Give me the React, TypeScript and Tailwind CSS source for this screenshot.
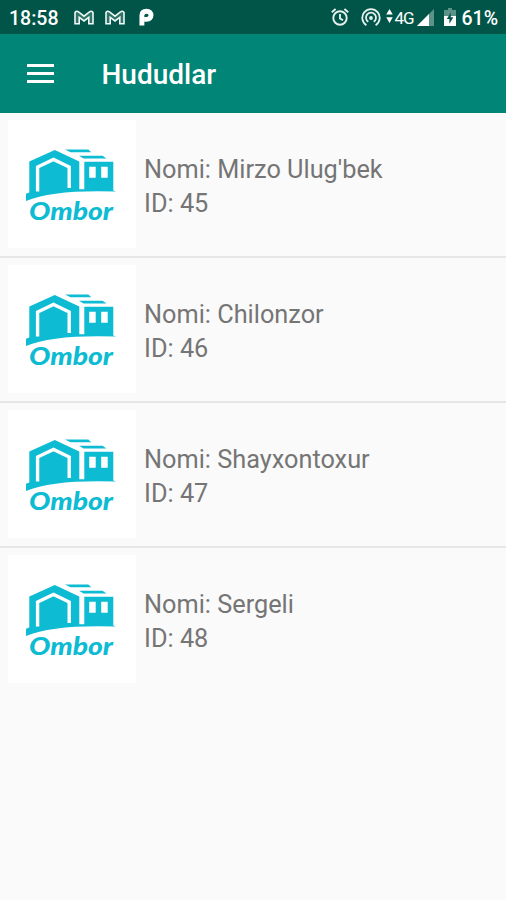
type Region = { id: number; name: string };

const regions: Region[] = [
  { id: 45, name: "Mirzo Ulug'bek" },
  { id: 46, name: "Chilonzor" },
  { id: 47, name: "Shayxontoxur" },
  { id: 48, name: "Sergeli" },
];

export default function App() {
  return (
    <div className="min-h-[900px] w-full bg-[#fafafa] font-['Roboto',sans-serif]">
      <StatusBar />
      <header className="flex h-[79px] items-center bg-[#018577] pl-[26.5px] text-white">
        <button aria-label="Menu" className="flex w-[27px] flex-col gap-[5px]">
          <span className="h-[3px] bg-white" />
          <span className="h-[3px] bg-white" />
          <span className="h-[3px] bg-white" />
        </button>
        <h1 className="ml-[48px] pt-[3px] text-[28px] font-medium leading-none">
          Hududlar
        </h1>
      </header>
      <main>
        {regions.map((r) => (
          <RegionRow key={r.id} region={r} />
        ))}
      </main>
    </div>
  );
}

function RegionRow({ region }: { region: Region }) {
  return (
    <div className="flex h-[145px] items-start gap-2 border-b-2 border-[#e6e6e6] pl-2 pt-[7px] last:border-0">
      <div className="size-32 shrink-0 bg-white">
        <OmborLogo />
      </div>
      <div className="pt-[33px] text-[25.3px] leading-[34px] text-[#757575]">
        <p>Nomi: {region.name}</p>
        <p>ID: {region.id}</p>
      </div>
    </div>
  );
}

function OmborLogo() {
  return (
    <svg viewBox="0 0 128 128" className="size-32" fill="#0dbbd3">
      {/* roof strips */}
      <path d="M57 29.6H80.3L83.3 32.2H62.5Z" />
      <path d="M71 35.7H94.5L98.5 38.5H75.5Z" />
      {/* barn and ground */}
      <path d="M21.3 41.5L46.8 30L71.3 41.5V69.3H76.3V41.7H105.3V70.4L108 71.6Q46 69.5 18 81V73.8L21.3 72.6Z" />
      <path
        d="M29.6 71.5V47L45.5 39.4L61.2 47V68"
        fill="none"
        stroke="#fff"
        strokeWidth="3.4"
      />
      {/* windows */}
      <path d="M81.2 46.7H87.7V57.7H81.2ZM93.2 46.7H99.7V57.7H93.2Z" fill="#fff" />
      <text
        x="21"
        y="100"
        textLength="84"
        lengthAdjust="spacingAndGlyphs"
        className="font-['Lato',sans-serif] text-[24px] font-black italic"
      >
        Ombor
      </text>
    </svg>
  );
}

function StatusBar() {
  return (
    <div className="flex h-[34px] items-center bg-[#015548] pl-[9px] pr-[8px] text-white">
      <span className="pt-[3px] text-[19.5px] font-medium leading-none">18:58</span>
      <MailIcon className="ml-[16px]" />
      <MailIcon className="ml-[11px]" />
      {/* P badge */}
      <svg viewBox="0 0 15 18" className="ml-[14px] h-[18px] w-[15px]">
        <path
          d="M2.9 17.6V7.3C2.9 4.5 4.8 3.2 7.6 3.2C10.3 3.2 12 4.9 12 7.3C12 9.7 10.3 11.4 7.6 11.4H5.4"
          fill="none"
          stroke="#fff"
          strokeWidth="4.9"
        />
      </svg>

      <div className="ml-auto flex items-center">
        <AlarmIcon />
        <HotspotIcon />
        <svg viewBox="0 0 7 14" className="mb-[2px] ml-[5px] h-[14px] w-[7px]" fill="#fff">
          <path d="M3.5 0L6.8 5.5H.2ZM3.5 14L.2 8.2H6.8Z" />
        </svg>
        <span className="ml-[1px] w-[20px] pt-[3px] text-[17px] leading-none tracking-[-1px]">
          4G
        </span>
        <svg viewBox="0 0 17 17" className="ml-[3px] size-[17px]">
          <path d="M0 17L17 0V17Z" fill="#5c9389" />
          <path d="M0 17L12 5V17Z" fill="#fff" />
        </svg>
        <svg viewBox="0 0 12 18" className="ml-[10px] h-[18px] w-[12px]">
          <path d="M4 0H8V2H12V8H0V2H4Z" fill="#5c9389" />
          <path d="M0 8H12V18H0Z" fill="#fff" />
          <path d="M6.8 4.5L2.8 11H5.4V15.8L9.4 9.2H6.8Z" fill="#015548" />
        </svg>
        <span className="ml-[5px] pt-[3px] text-[19.5px] font-medium leading-none">
          61%
        </span>
      </div>
    </div>
  );
}

function MailIcon({ className }: { className: string }) {
  return (
    <svg viewBox="0 0 20 15" className={`h-[15px] w-[20px] ${className}`}>
      <path
        d="M1 13.7V2.5Q2.5 .2 4.5 2L10 6.2L15.5 2Q17.5 .2 19 2.5V13.7H14.8V7.3L10 11L5.2 7.3V13.7Z"
        fill="#2f7468"
        stroke="#f0f7f6"
        strokeWidth="1.6"
      />
    </svg>
  );
}

function AlarmIcon() {
  return (
    <svg
      viewBox="0 0 18 18"
      className="size-[18px]"
      fill="none"
      stroke="#e6f0ee"
      strokeWidth="1.9"
    >
      <circle cx="9" cy="10" r="6.7" />
      <path d="M9 6V10.4L12 12.2M.8 4.2L4.6 1M17.2 4.2L13.4 1" />
    </svg>
  );
}

function HotspotIcon() {
  return (
    <svg
      viewBox="0 0 20 18"
      className="ml-[12px] h-[18px] w-[20px]"
      fill="none"
      stroke="#e6f0ee"
      strokeWidth="1.8"
    >
      <path d="M5.4 17.2A8.7 8.7 0 1 1 14.6 17.2" />
      <path d="M7.3 13.8A5 5 0 1 1 12.7 13.8" />
      <circle cx="10" cy="10" r="1.9" fill="#e6f0ee" stroke="none" />
    </svg>
  );
}
